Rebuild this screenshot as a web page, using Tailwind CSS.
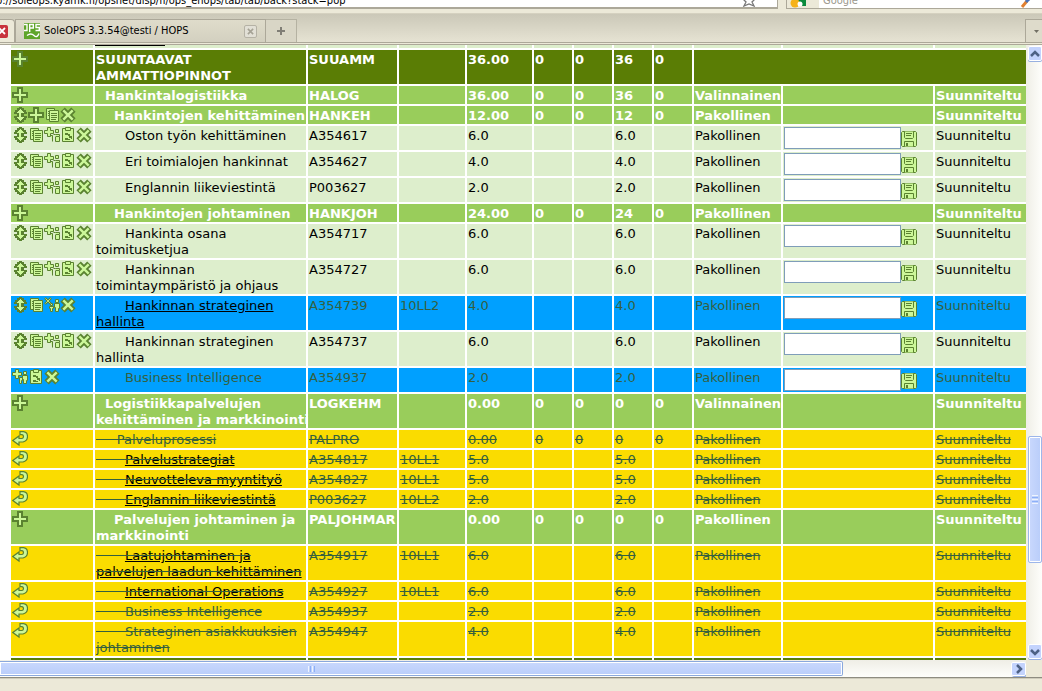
<!DOCTYPE html>
<html lang="fi">
<head>
<meta charset="utf-8">
<title>SoleOPS 3.3.54@testi / HOPS</title>
<script src="https://cdn.jsdelivr.net/npm/@tailwindcss/browser@4"></script>
</head>
<body class="flex h-screen flex-col overflow-hidden bg-[#ece9d8] font-['DejaVu_Sans',Verdana,sans-serif] text-[13px] leading-4 text-black">

<svg class="hidden" aria-hidden="true">
  <symbol id="plus" viewBox="0 0 16 16"><path fill="#5a8230" d="M5 0h6v5h5v6h-5v5H5v-5H0V5h5z"/><path fill="#ccf799" d="M7 2h2v5h5v2H9v5H7V9H2V7h5z"/></symbol>
  <symbol id="move" viewBox="0 0 16 16"><path fill="#5a8230" d="M7 0h3v1h2v2h2v2h1v2h-3v2h3v2h-1v2h-2v2h-2v1H7v-1H5v-2H3v-2H2V9h3V7H2V5h1V3h2V1h2z"/><path fill="#ccf799" d="M8 2h1v1h1v1h1v1h1v1H9v4h3v1h-1v1h-1v1H9v1H8v-1H7v-1H6v-1H5v-1h2V6H5V5h1V4h1V3h1z"/></symbol>
  <symbol id="cross" viewBox="0 0 16 16"><path stroke="#5a8230" stroke-width="6.2" d="M2.6 2.6l10.8 10.8M13.4 2.6L2.6 13.4"/><path stroke="#ccf799" stroke-width="2.4" d="M3.3 3.3l9.4 9.4M12.7 3.3l-9.4 9.4"/></symbol>
  <symbol id="copy" viewBox="0 0 16 16"><path fill="#ccf799" stroke="#5a8230" d="M2.5 1.5h8v11h-8z"/><path stroke="#5a8230" d="M4 4.500h2M4 6.500h2M4 8.500h2"/><path fill="#ccf799" stroke="#5a8230" d="M5.500 3.500h9v11h-9z"/><path stroke="#5a8230" d="M7 6.500h6M7 8.500h6M7 10.500h6M7 12.500h5"/></symbol>
  <symbol id="people" viewBox="0 0 16 16"><path fill="#ccf799" stroke="#5a8230" d="M11.500 2.500h3v3h-3zM9.500 7.500h2M11.500 7.500h4v2h-4M11.500 10v4.500h4V10M6.500 8.500h2v6"/><path fill="#ccf799" stroke="#5a8230" d="M3.500.5h3v3h3v3h-3v3h-3v-3h-3v-3h3z"/></symbol>
  <symbol id="grp" viewBox="0 0 16 16"><path fill="#ccf799" stroke="#5a8230" d="M11.500 2.500h3v3h-3zM10.500 6.500h5v5h-1v3h-3v-4h-1zM7.500 8.500h3v3h-1v3h-2z"/><path fill="#ccf799" stroke="#5a8230" d="M3.500.5h3v3h3v3h-3v3h-3v-3h-3v-3h3z"/></symbol>
  <symbol id="xgrp" viewBox="0 0 16 16"><path fill="#ccf799" stroke="#5a8230" d="M11.500 2.500h3v3h-3zM10.500 6.500h5v5h-1v3h-3v-4h-1zM6.500 6.500h2v2h-2zM5.500 9.500h4v2h-1v3h-2v-3h-1z"/><path stroke="#5a8230" stroke-width="2.400" d="M1 1l6 6M7 1L1 7"/><path stroke="#ccf799" stroke-width=".8" d="M1.500 1.500l5 5M6.500 1.500l-5 5"/></symbol>
  <symbol id="plan" viewBox="0 0 16 16"><path fill="#ccf799" stroke="#5a8230" d="M2.500 1.500h11v13h-11z"/><path fill="#ccf799" stroke="#5a8230" d="M5.500.5h5v3h-5z"/><path fill="#5a8230" d="M5 6h3v1h2v2H8V8H5zM9 9h3v3h-1v-1H9zM5 11h3v1h2v1H5z"/></symbol>
  <symbol id="back" viewBox="0 0 16 16"><path fill="#ccf799" stroke="#5a8230" stroke-width="1.200" d="M8 .6h3.500q4 .6 4 4.900t-4.500 5.500H7v3L.8 9.500 7 5v2.500h3q1.500-.3 1.500-2T10 3.600H8z"/></symbol>
  <symbol id="disk" viewBox="0 0 16 16"><path fill="#ccf799" stroke="#5a8230" d="M1.500.5h13l1 1v13l-1 1h-13l-1-1v-13z"/><path fill="#ccf799" stroke="#5a8230" d="M3.500.5v6l1 1h7l1-1v-6M3.500 15.500v-5h9v5"/><path stroke="#5a8230" d="M5 2.500h6M5 4.500h5"/><path fill="#5a8230" d="M5 12h2v3H5z"/></symbol>
</svg>

<header class="shrink-0">
  <div class="flex h-[14px] items-start border-b border-[#d5d1c0] bg-[#ece9d8]">
    <div class="flex h-[9px] w-[778px] items-end overflow-hidden border-r border-b-2 border-[#aca899] bg-white font-['DejaVu_Sans_Condensed','DejaVu_Sans',sans-serif] text-[11px]">
      <span class="-mb-0.5 -ml-1 flex-1 whitespace-nowrap">p://soleops.kyamk.fi/opsnet/disp/fi/ops_ehops/tab/tab/back?stack=pop</span>
      <svg class="mr-[21px] h-3.5 w-3.5 shrink-0" viewBox="0 0 14 14"><path fill="#fff" stroke="#777" stroke-width="1.300" d="M7 0l2 5 4 1-3 3 2 4-5-2-5 2 2-4-3-3 4-1z"/></svg>
    </div>
    <div class="ml-2 flex h-[9px] flex-1 items-end overflow-hidden border-b border-l border-[#aca899] bg-white">
      <svg class="h-4 w-8 shrink-0" viewBox="0 0 32 16"><path fill="#ece9d8" d="M0 0h32v16H0z"/><path fill="#0a8a3c" d="M10 0h9v14h-9z"/><circle cx="8" cy="11" r="4.500" fill="#f5b21a"/><circle cx="13" cy="12" r="2.500" fill="#fff"/></svg>
      <span class="-mb-px ml-1 flex-1 font-['DejaVu_Sans_Condensed','DejaVu_Sans',sans-serif] text-[11px] text-[#9a978c]">Google</span>
      <svg class="mr-2 h-3.5 w-3.5" viewBox="0 0 14 14"><path stroke="#e08030" stroke-width="3" d="M2 13l5-6"/><path stroke="#4a72b8" stroke-width="3" d="M6 8l5-5"/></svg>
    </div>
  </div>
  <div class="flex h-7 items-end bg-linear-to-b from-[#cbc8b8] to-[#e6e3d3]">
    <div class="flex h-[23px] w-[15px] items-center rounded-tr-sm border-t border-r border-[#aca899] bg-[#ece9d8]">
      <button class="-ml-1 flex h-[13px] w-3 items-center justify-center rounded-xs bg-[#c8323c]" aria-label="Sulje"><svg class="h-2 w-2" viewBox="0 0 8 8"><path stroke="#fff" stroke-width="1.800" d="M1 1l6 6M7 1L1 7"/></svg></button>
    </div>
    <div class="flex h-[23px] w-[251px] items-center border-t border-r border-l border-[#aca899] bg-linear-to-b from-[#dfdccb] to-[#d3d0c0] pl-2">
      <svg class="h-4 w-4 shrink-0" viewBox="0 0 16 16"><path fill="#5fa52a" d="M0 0h16v16H0z"/><path fill="none" stroke="#fff" stroke-width="1.400" d="M0 1.500h3v6H0M5.700 9V1.500h3.600v3.500H5.700M16 1.500h-4V4.500h3.300v3H11.500M3 12.500q4-3 7 0t5-2"/></svg>
      <a href="#" class="ml-1 flex-1 whitespace-nowrap font-['DejaVu_Sans_Condensed','DejaVu_Sans',sans-serif] text-[11px]">SoleOPS 3.3.54@testi / HOPS</a>
      <button class="mr-2 flex h-[13px] w-[13px] items-center justify-center rounded-xs border border-[#b5b2a5] bg-[#e2e0d6]" aria-label="Sulje välilehti"><svg class="h-[7px] w-[7px]" viewBox="0 0 8 8"><path stroke="#a5a295" stroke-width="1.800" d="M1 1l6 6M7 1L1 7"/></svg></button>
    </div>
    <button class="flex h-[23px] w-[31px] items-center justify-center border-t border-r border-[#b5b2a2] bg-[#d9d6c6]" aria-label="Uusi välilehti">
      <svg class="h-2 w-2" viewBox="0 0 8 8"><path fill="#807e76" d="M3 0h2v3h3v2H5v3H3V5H0V3h3z"/></svg>
    </button>
    <span class="flex-1"></span>
    <button class="flex h-[23px] w-[17px] items-center justify-center border-t border-l border-[#aca899] bg-[#dedbcb]" aria-label="Luettele välilehdet">
      <svg class="ml-1 h-[3px] w-[5px]" viewBox="0 0 5 3"><path fill="#716f64" d="M0 0h5L2.500 3z"/></svg>
    </button>
  </div>
  <div class="h-[3px] border-t border-b border-[#aca899] bg-[#ece9d8]"></div>
</header>

<main class="flex min-h-0 flex-1">
  <div class="min-w-0 flex-1 overflow-hidden bg-white">
    <div class="-mt-0.5 -mr-0.5 ml-[9px]">
      <table class="w-full table-fixed border-separate border-spacing-0.5">
        <colgroup><col class="w-[82px]"><col class="w-[211px]"><col class="w-[89px]"><col class="w-[66px]"><col class="w-[65px]"><col class="w-[38px]"><col class="w-[38px]"><col class="w-[38px]"><col class="w-[38px]"><col class="w-[87px]"><col class="w-[150px]"><col></colgroup>
        <tbody id="rows"></tbody>
      </table>
    </div>
  </div>
  <div class="flex w-4 shrink-0 flex-col items-center bg-linear-to-r from-[#efeee6] to-[#fefefb] pt-px pl-px">
    <button class="flex h-[15px] w-[14px] items-center justify-center rounded-xs border border-white bg-[#c3d3fd] shadow-[0_1px_0_#98b0e0]" aria-label="Ylös"><svg class="h-2 w-2.5" viewBox="0 0 10 8"><path fill="none" stroke="#4d6185" stroke-width="2.500" d="M1 6l4-4 4 4"/></svg></button>
    <span class="grow-[375]"></span>
    <div class="flex h-[127px] w-[14px] flex-col items-center justify-center gap-px rounded-xs border border-[#9db6ea] bg-linear-to-r from-[#c9d8fd] to-[#b9cdfa] shadow-[inset_0_0_0_1px_#fff]">
      <i class="h-px w-1.5 bg-[#eef4fe]"></i><i class="h-px w-1.5 bg-[#8cb0f8]"></i><i class="h-px w-1.5 bg-[#eef4fe]"></i><i class="h-px w-1.5 bg-[#8cb0f8]"></i><i class="h-px w-1.5 bg-[#eef4fe]"></i>
    </div>
    <span class="grow-[81]"></span>
    <button class="mb-px flex h-[15px] w-[14px] items-center justify-center rounded-xs border border-white bg-[#c3d3fd] shadow-[0_1px_0_#98b0e0]" aria-label="Alas"><svg class="h-2 w-2.5" viewBox="0 0 10 8"><path fill="none" stroke="#4d6185" stroke-width="2.500" d="M1 2l4 4 4-4"/></svg></button>
  </div>
</main>

<div class="flex h-[17px] shrink-0">
  <div class="flex flex-1 items-center bg-linear-to-b from-[#efeee6] to-[#fefefb]">
    <div class="flex h-[15px] w-[843px] items-center justify-center rounded-r-xs border border-l-0 border-[#8aa8dc] bg-linear-to-b from-[#c9d8fd] to-[#b9cdfa] shadow-[inset_0_0_0_1px_#fff]">
      <div class="-ml-[219px] flex gap-px"><i class="h-1.5 w-px bg-[#eef4fe]"></i><i class="h-1.5 w-px bg-[#8cb0f8]"></i><i class="h-1.5 w-px bg-[#eef4fe]"></i><i class="h-1.5 w-px bg-[#8cb0f8]"></i></div>
    </div>
    <span class="flex-1"></span>
    <button class="flex h-[14px] w-[15px] items-center justify-center rounded-xs border border-white bg-[#c3d3fd] shadow-[1px_1px_0_#98b0e0]" aria-label="Oikealle"><svg class="h-2.5 w-2" viewBox="0 0 8 10"><path fill="none" stroke="#4d6185" stroke-width="2.500" d="M2 1l4 4-4 4"/></svg></button>
  </div>
  <div class="w-4 bg-[#ece9d8]"></div>
</div>
<footer class="h-[14px] shrink-0 border-t border-[#8e8c80] bg-[#ece9d8] shadow-[inset_0_1px_0_#cfccbc]"></footer>

<script>
const styles = {
  dark:  'bg-[#5a7d05] align-top px-px whitespace-nowrap h-[18px] font-bold text-white',
  mid:   'bg-[#99cd5b] align-top px-px whitespace-nowrap h-[18px] font-bold text-white',
  light: 'bg-[#ddeecc] align-top px-px whitespace-nowrap h-[18px]',
  blue:  'bg-[#00a0ff] align-top px-px whitespace-nowrap h-[18px] text-[#35603f]',
  gold:  'bg-[#fadc00] align-top px-px whitespace-nowrap h-[18px] text-[#35603f] line-through'
};
const labels = {plus:'Lisää', move:'Siirrä', cross:'Poista', copy:'Kopioi', people:'Lisää toteutus', grp:'Lisää toteutus', xgrp:'Poista toteutus', plan:'Suunnitelma', back:'Palauta'};
const link = t => `<a href="#" class="text-black underline">${t}</a>`;
const all = 'move copy people plan cross';
// kind, icons, indent, name, code, implementation, credits, a, b, total, c, type, has note field
const data = [
  ['dark','plus',0,'SUUNTAAVAT<br>AMMATTIOPINNOT','SUUAMM','','36.00','0','0','36','0','',0],
  ['mid','plus',2,'Hankintalogistiikka','HALOG','','36.00','0','0','36','0','Valinnainen',0],
  ['mid','move plus copy cross',4,'Hankintojen kehittäminen','HANKEH','','12.00','0','0','12','0','Pakollinen',0],
  ['light',all,7,'Oston työn kehittäminen','A354617','','6.0','','','6.0','','Pakollinen',1],
  ['light',all,7,'Eri toimialojen hankinnat','A354627','','4.0','','','4.0','','Pakollinen',1],
  ['light',all,7,'Englannin liikeviestintä','P003627','','2.0','','','2.0','','Pakollinen',1],
  ['mid','plus',4,'Hankintojen johtaminen','HANKJOH','','24.00','0','0','24','0','Pakollinen',0],
  ['light',all,7,'Hankinta osana<br>toimitusketjua','A354717','','6.0','','','6.0','','Pakollinen',1],
  ['light',all,7,'Hankinnan<br>toimintaympäristö ja ohjaus','A354727','','6.0','','','6.0','','Pakollinen',1],
  ['blue','move copy xgrp cross',7,link('Hankinnan strateginen<br>hallinta'),'A354739','10LL2','4.0','','','4.0','','Pakollinen',1],
  ['light',all,7,'Hankinnan strateginen<br>hallinta','A354737','','6.0','','','6.0','','Pakollinen',1],
  ['blue','grp plan cross',7,'Business Intelligence','A354937','','2.0','','','2.0','','Pakollinen',1],
  ['mid','plus',2,'Logistiikkapalvelujen<br>kehittäminen ja markkinointi','LOGKEHM','','0.00','0','0','0','0','Valinnainen',0],
  ['gold','back',5,'Palveluprosessi','PALPRO','','0.00','0','0','0','0','Pakollinen',0],
  ['gold','back',7,link('Palvelustrategiat'),'A354817','10LL1','5.0','','','5.0','','Pakollinen',0],
  ['gold','back',7,link('Neuvotteleva myyntityö'),'A354827','10LL1','5.0','','','5.0','','Pakollinen',0],
  ['gold','back',7,link('Englannin liikeviestintä'),'P003627','10LL2','2.0','','','2.0','','Pakollinen',0],
  ['mid','plus',4,'Palvelujen johtaminen ja<br>markkinointi','PALJOHMAR','','0.00','0','0','0','0','Pakollinen',0],
  ['gold','back',7,link('Laatujohtaminen ja<br>palvelujen laadun kehittäminen'),'A354917','10LL1','6.0','','','6.0','','Pakollinen',0],
  ['gold','back',7,link('International Operations'),'A354927','10LL1','6.0','','','6.0','','Pakollinen',0],
  ['gold','back',7,'Business Intelligence','A354937','','2.0','','','2.0','','Pakollinen',0],
  ['gold','back',7,'Strateginen asiakkuuksien<br>johtaminen','A354947','','4.0','','','4.0','','Pakollinen',0]
];
let html = '<tr>' + Array.from({length: 12}, (_, i) => `<td class="h-[3px] bg-[#ddeecc] p-0">${i === 1 ? '<div class="mb-0.5 h-px w-[70px] bg-black"></div>' : ''}</td>`).join('') + '</tr>';
data.forEach(([kind, icons, indent, name, ...rest]) => {
  const c = styles[kind], note = rest.pop(), type = rest.pop();
  const text = (v, extra = '') => `<td class="${c} pt-0.5 pb-0 ${extra}">${v}</td>`;
  html += `<tr><td class="${c} py-px"><div class="flex">` + icons.split(' ').map(n => `<button class="h-4 w-4" aria-label="${labels[n]}"><svg class="h-4 w-4" fill="none"><use href="#${n}"/></svg></button>`).join('') + '</div></td>';
  html += text('&nbsp;'.repeat(indent) + name, 'relative');
  html += rest.map(v => text(v)).join('');
  if (kind === 'dark') { html += `<td colspan="3" class="${c} py-px"></td></tr>`; return; }
  html += text(type, 'relative') + `<td class="${c} py-px">`;
  if (note) html += `<div class="flex items-end"><input type="text" aria-label="Huomautus" class="h-[22px] w-[117px] border border-[#7f9db9] bg-white px-1 text-black"><button class="mb-0.5 h-4 w-4" aria-label="Tallenna"><svg class="h-4 w-4" fill="none"><use href="#disk"/></svg></button></div>`;
  html += '</td>' + text('Suunniteltu') + '</tr>';
});
html += '<tr>' + '<td class="h-[18px] bg-[#5a7d05] p-0"></td>'.repeat(12) + '</tr>';
document.getElementById('rows').innerHTML = html;
</script>
</body>
</html>
